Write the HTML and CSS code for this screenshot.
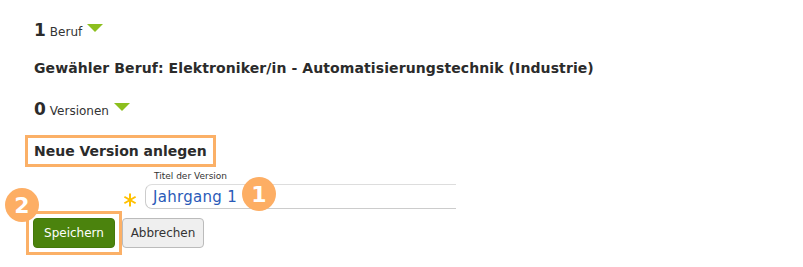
FILE: index.html
```html
<!DOCTYPE html>
<html>
<head>
<meta charset="utf-8">
<link rel="stylesheet" href="styles.css">
</head>
<body>
<div class="page">
  <div class="count-row"><span class="num">1</span> <span class="unit">Beruf</span> <span class="tri"></span></div>
  <div class="chosen">Gewähler Beruf: Elektroniker/in - Automatisierungstechnik (Industrie)</div>
  <div class="count-row second"><span class="num">0</span> <span class="unit">Versionen</span> <span class="tri"></span></div>
  <div class="new-title">Neue Version anlegen</div>
  <div class="form-row">
    <svg class="req" width="14" height="14" viewBox="0 0 14 14"><g stroke="#ffc000" stroke-width="2" stroke-linecap="butt"><line x1="7" y1="0.5" x2="7" y2="13.5"/><line x1="1.4" y1="3.75" x2="12.6" y2="10.25"/><line x1="1.4" y1="10.25" x2="12.6" y2="3.75"/></g></svg>
    <div class="field">
      <div class="label">Titel der Version</div>
      <div class="input"><span class="value">Jahrgang 1</span><span class="badge b1">1</span></div>
    </div>
  </div>
  <div class="buttons">
    <div class="save-wrap">
      <span class="badge b2">2</span>
      <button class="btn save">Speichern</button>
    </div>
    <button class="btn cancel">Abbrechen</button>
  </div>
</div>
</body>
</html>
```
FILE: styles.css
```css
html, body { margin: 0; padding: 0; background: #fff; }
body { font-family: "DejaVu Sans", Verdana, sans-serif; color: #333; }
.page { padding: 20px 0 0 34px; width: 769px; height: 247px; }
.count-row { display: flex; align-items: baseline; height: 20px; }
.count-row .num { font-size: 17px; font-weight: bold; color: #2b2b2b; }
.count-row .unit { font-size: 12px; margin-left: 4px; color: #333; }
.tri { display: inline-block; width: 0; height: 0; border-left: 8px solid transparent; border-right: 8px solid transparent; border-top: 8px solid #8cbf1e; margin-left: 5px; align-self: center; position: relative; top: -2px; }
.chosen { font-size: 14px; font-weight: bold; color: #2b2b2b; margin-top: 20px; letter-spacing: 0.1px; }
.count-row.second { margin-top: 23px; }
.new-title { display: inline-block; font-size: 14px; font-weight: bold; color: #2b2b2b; border: 3px solid #fbb067; padding: 5px 6px 5px 6px; margin-left: -9px; margin-top: 16px; }
.form-row { display: flex; align-items: flex-end; margin-left: 89px; margin-top: 4px; }
.req { display: block; margin: 0 8px 2px 0; }
.field { display: flex; flex-direction: column; }
.label { font-size: 9px; color: #333; margin-left: 9px; margin-bottom: 3px; }
.input { position: relative; width: 303px; height: 23px; border: 1px solid #ccc; border-right: none; border-top-color: #ddd; border-radius: 7px 0 0 7px; padding-left: 7px; display: flex; align-items: center; }
.value { font-size: 15px; color: #2a5ab8; letter-spacing: 0.3px; }
.badge { position: absolute; width: 34px; height: 34px; border-radius: 50%; background: #fdae64; color: #fff; font-weight: bold; font-size: 22px; display: flex; align-items: center; justify-content: center; font-family: "DejaVu Sans", sans-serif; }
.b1 { left: 96px; top: -8px; }
.buttons { display: flex; align-items: center; margin-left: -8px; margin-top: 2px; }
.save-wrap { position: relative; border: 3px solid #fbb067; padding: 4px; }
.b2 { left: -24px; top: -26px; }
.btn { font-family: "DejaVu Sans", sans-serif; font-size: 12px; height: 30px; width: 82px; border-radius: 4px; padding: 0; cursor: pointer; }
.save { background: #4b830d; color: #fff; border: 1px solid #44780b; display: block; }
.cancel { background: #efefef; color: #333; border: 1px solid #bbb; margin-left: 0; }
```
